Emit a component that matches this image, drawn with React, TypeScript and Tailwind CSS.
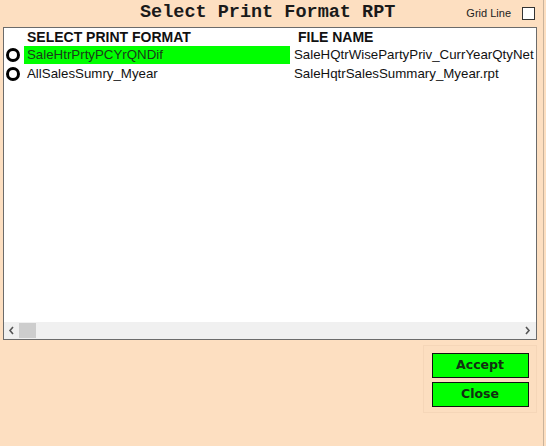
import React from "react";

const rows = [
  { name: "SaleHtrPrtyPCYrQNDif", file: "SaleHQtrWisePartyPriv_CurrYearQtyNet", selected: true },
  { name: "AllSalesSumry_Myear", file: "SaleHqtrSalesSummary_Myear.rpt", selected: false },
];

function Radio() {
  return (
    <div className="w-[20px] h-[18px] flex items-center pl-[2px] shrink-0">
      <div className="w-[14px] h-[14px] rounded-full border-[3.5px] border-black bg-white" />
    </div>
  );
}

export default function App() {
  return (
    <div className="w-[546px] h-[446px] bg-[#fddfc1] flex overflow-hidden" style={{ fontFamily: '"Liberation Sans", Arial, sans-serif' }}>
      <div className="w-[543px] h-full flex flex-col">
        {/* title bar */}
        <div className="h-[27px] flex items-center shrink-0">
          <div className="pl-[140px] text-[18.5px] font-bold text-[#1a1a1a] leading-none" style={{ fontFamily: '"Liberation Mono", "Courier New", monospace' }}>
            Select Print Format RPT
          </div>
          <div className="ml-auto flex items-center pr-[8px]">
            <span className="text-[11px] text-[#222]">Grid Line</span>
            <div className="ml-[11px] w-[13px] h-[13px] border border-[#333] bg-white" />
          </div>
        </div>
        {/* list box */}
        <div className="ml-[3px] w-[534px] h-[313px] border border-[#6b6b6b] bg-white flex flex-col shrink-0">
          <div className="flex-1 overflow-hidden">
            <div className="h-[17px] flex items-center text-[14px] font-bold text-[#111] leading-none whitespace-nowrap">
              <div className="pl-[23px] w-[294px]">SELECT PRINT FORMAT</div>
              <div>FILE NAME</div>
            </div>
            {rows.map((r) => (
              <div key={r.name} className="h-[19px] flex items-center whitespace-nowrap text-[13.3px] leading-none">
                <Radio />
                <div className={`w-[266px] h-[18px] flex items-center pl-[3px] shrink-0 ${r.selected ? "bg-[#00ff00] text-[#1a3a1a]" : "text-[#111]"}`}>
                  {r.name}
                </div>
                <div className="pl-[4px] text-[#111]">{r.file}</div>
              </div>
            ))}
          </div>
          {/* scrollbar */}
          <div className="h-[17px] bg-[#f0f0f0] flex items-center shrink-0">
            <div className="w-[15px] flex items-center justify-center">
              <svg width="7" height="9" viewBox="0 0 7 9"><path d="M5 1 L2 4.5 L5 8" stroke="#555" strokeWidth="1.6" fill="none" /></svg>
            </div>
            <div className="w-[17px] h-[15px] bg-[#cdcdcd]" />
            <div className="flex-1" />
            <div className="w-[17px] flex items-center justify-center">
              <svg width="7" height="9" viewBox="0 0 7 9"><path d="M2 1 L5 4.5 L2 8" stroke="#555" strokeWidth="1.6" fill="none" /></svg>
            </div>
          </div>
        </div>
        {/* buttons */}
        <div className="flex justify-end pr-[6px] pt-[5px]">
          <div className="w-[114px] h-[68px] border border-[#f5d6b8] bg-[#fcdec0] flex flex-col items-center pt-[7px] gap-[4px]">
            {["Accept", "Close"].map((b) => (
              <div
                key={b}
                className="w-[97px] h-[25px] bg-[#00ff00] border-[1.5px] border-[#111] flex items-center justify-center text-[12.5px] font-bold text-[#123012]"
                style={{ fontFamily: '"DejaVu Sans", Tahoma, sans-serif' }}
              >
                {b}
              </div>
            ))}
          </div>
        </div>
      </div>
      <div className="w-px h-full bg-[#c9b39c]" />
      <div className="w-[2px] h-full bg-[#fddfc1]" />
    </div>
  );
}
